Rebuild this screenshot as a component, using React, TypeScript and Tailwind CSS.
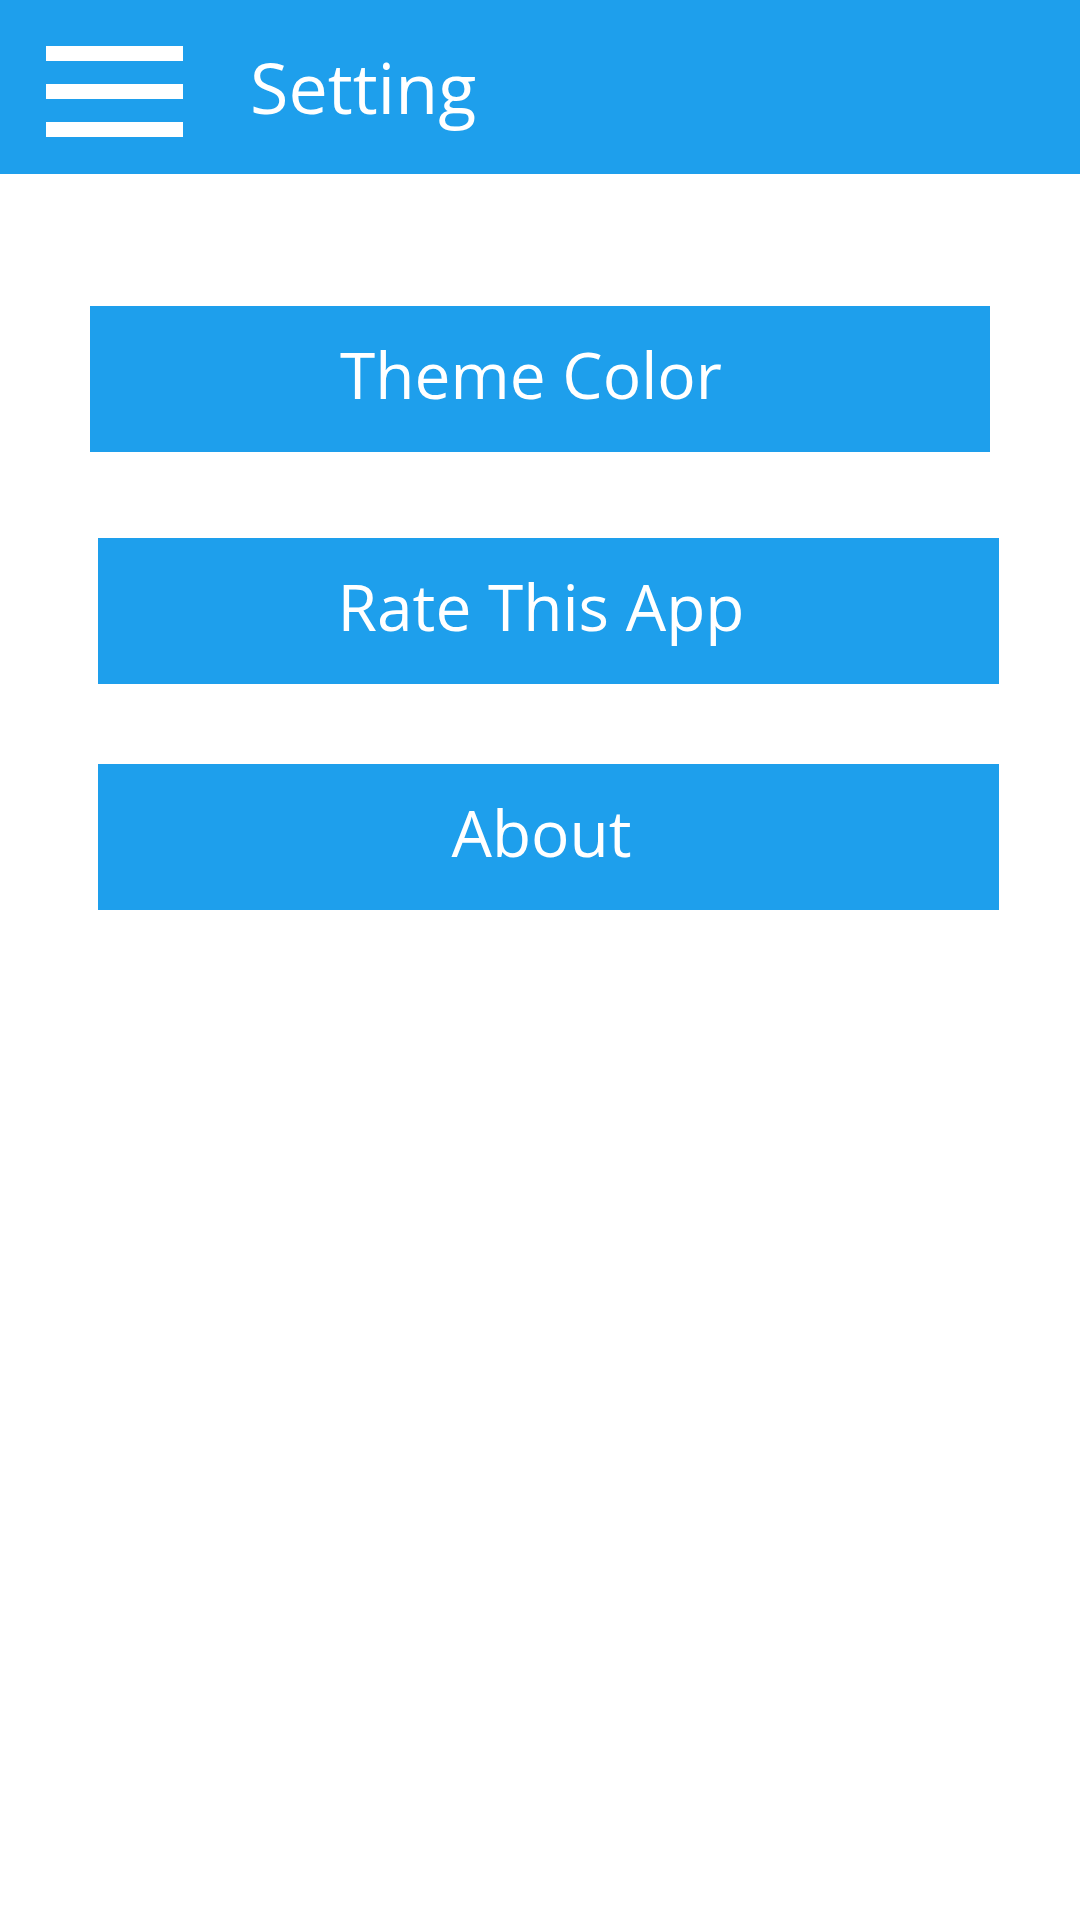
export default function App() {
  const font = { fontFamily: '"Open Sans", "Noto Sans", sans-serif' };
  return (
    <div className="h-[1920px] w-[1080px] bg-white" style={font}>
      <header className="flex h-[174px] items-center bg-[#1e9fec]">
        <div className="ml-[46px] mt-[9px] flex w-[137px] flex-col gap-[23px]">
          <span className="h-[15px] bg-white" />
          <span className="h-[15px] bg-white" />
          <span className="h-[15px] bg-white" />
        </div>
        <h1 className="ml-[67px] text-[70px] leading-none text-white">Setting</h1>
      </header>
      <div className="flex flex-col">
        <button className="ml-[90px] mt-[132px] h-[146px] w-[900px] bg-[#1e9fec] pb-[8px] pr-[18px] text-[64px] text-white">
          Theme Color
        </button>
        <button className="ml-[98px] mt-[86px] h-[146px] w-[901px] bg-[#1e9fec] pb-[8px] pr-[15px] text-[64px] text-white">
          Rate This App
        </button>
        <button className="ml-[98px] mt-[80px] h-[146px] w-[901px] bg-[#1e9fec] pb-[8px] pr-[14px] text-[64px] text-white">
          About
        </button>
      </div>
    </div>
  );
}
